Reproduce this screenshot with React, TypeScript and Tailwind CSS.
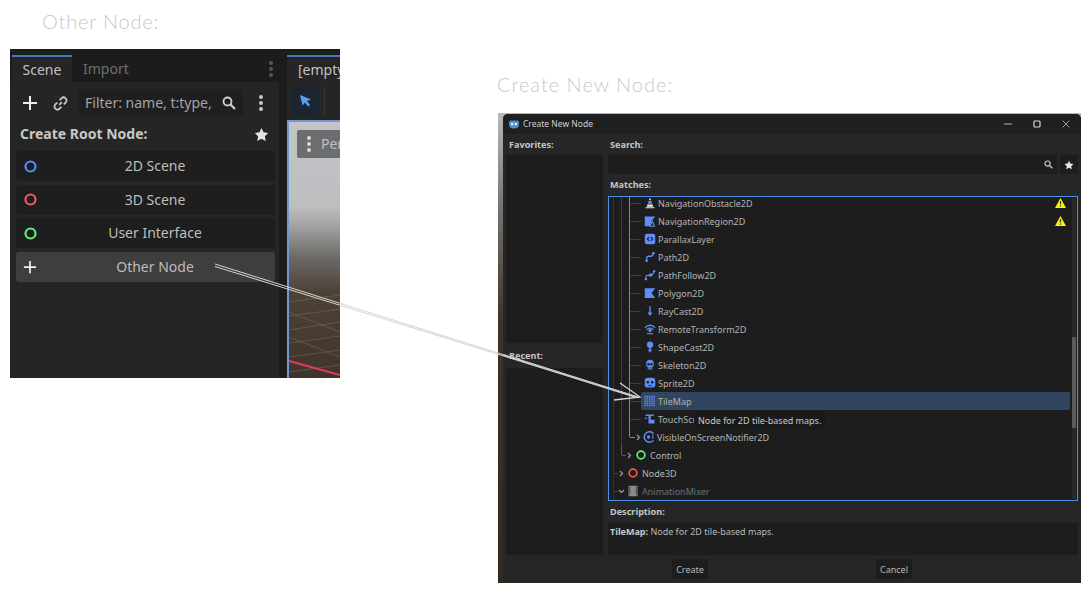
import { ReactNode } from 'react'

const BLUE = '#5f8df5'

function Svg({ size = 12, children }: { size?: number; children: ReactNode }) {
  return (
    <svg width={size} height={size} viewBox="0 0 16 16" className="shrink-0">
      {children}
    </svg>
  )
}

function Kebab({ color = '#c8c8c8' }: { color?: string }) {
  return (
    <svg width="6" height="18" viewBox="0 0 6 18" className="shrink-0">
      <circle cx="3" cy="3" r="2" fill={color} />
      <circle cx="3" cy="9" r="2" fill={color} />
      <circle cx="3" cy="15" r="2" fill={color} />
    </svg>
  )
}

function Plus({ size = 16 }: { size?: number }) {
  return (
    <svg width={size} height={size} viewBox="0 0 16 16" className="shrink-0">
      <path d="M8 1v14M1 8h14" stroke="#eeeeee" strokeWidth="2" />
    </svg>
  )
}

function Search({ size = 14, color = '#d0d0d0' }: { size?: number; color?: string }) {
  return (
    <svg width={size} height={size} viewBox="0 0 14 14" className="shrink-0">
      <circle cx="5.5" cy="5.5" r="4" fill="none" stroke={color} strokeWidth="1.8" />
      <path d="M8.5 8.5L13 13" stroke={color} strokeWidth="2.2" />
    </svg>
  )
}

function Star({ size = 16 }: { size?: number }) {
  return (
    <svg width={size} height={size} viewBox="0 0 16 16" className="shrink-0">
      <path d="M8 1l2.2 4.6 5 .7-3.6 3.5.9 5L8 12.4l-4.5 2.4.9-5L.8 6.3l5-.7z" fill="#e4e4e4" />
    </svg>
  )
}

function Ring({ color, size = 13 }: { color: string; size?: number }) {
  return (
    <svg width={size} height={size} viewBox="0 0 13 13" className="shrink-0">
      <circle cx="6.5" cy="6.5" r="5" fill="none" stroke={color} strokeWidth="2.2" />
    </svg>
  )
}

function RootButton({ icon, label, active }: { icon: ReactNode; label: string; active?: boolean }) {
  return (
    <div className={`flex h-[30px] items-center rounded-[3px] px-[7px] ${active ? 'bg-[#3e3e3e]' : 'bg-[#1e1e1e]'}`}>
      <span className="flex w-[14px] justify-center">{icon}</span>
      <span className="flex-1 pl-[5px] text-center text-[14px] leading-none text-[#bdbdbd]">{label}</span>
    </div>
  )
}

function Warning() {
  return (
    <svg width="11" height="10" viewBox="0 0 11 10" className="shrink-0">
      <path d="M5.5 0L11 10H0z" fill="#f5f50a" />
      <path d="M5.5 3v3.6M5.5 7.6v1.2" stroke="#3a3a1a" strokeWidth="1.2" />
    </svg>
  )
}

const ICONS: Record<string, ReactNode> = {
  obstacle: (
    <Svg>
      <path d="M8 1l1.4 3H6.6z" fill="#f0f0f0" />
      <path d="M6.2 5h3.6l1.2 4H5z" fill={BLUE} />
      <path d="M4.6 10h6.8l1 3H3.6z" fill="#f0f0f0" />
      <path d="M2 13.5h12V15H2z" fill="#f0f0f0" />
    </Svg>
  ),
  region: (
    <Svg>
      <path d="M1 2h14l-5 6-2 7H1z" fill={BLUE} />
      <path d="M11 8l3 7H8z" fill="none" stroke={BLUE} strokeWidth="1.4" />
    </Svg>
  ),
  parallax: (
    <Svg>
      <rect x="1" y="1" width="14" height="14" rx="3" fill={BLUE} />
      <path d="M7 5.5L4.5 8 7 10.5M9 5.5L11.5 8 9 10.5" fill="none" stroke="#16243f" strokeWidth="1.5" />
    </Svg>
  ),
  path: (
    <Svg>
      <path d="M3.5 12.5v-3Q3.5 7 6 7h3q3 0 3.5-3.5" fill="none" stroke={BLUE} strokeWidth="1.7" />
      <circle cx="3.5" cy="13" r="1.8" fill={BLUE} />
      <circle cx="12.5" cy="3" r="1.8" fill={BLUE} />
    </Svg>
  ),
  follow: (
    <Svg>
      <path d="M2.5 13.5v-3q0-2 2.500-2h4q3 0 4-4.500" fill="none" stroke={BLUE} strokeWidth="1.5" />
      <circle cx="2.5" cy="13.5" r="1.6" fill={BLUE} />
      <circle cx="9" cy="8" r="2.3" fill={BLUE} />
      <circle cx="13.5" cy="3" r="1.6" fill={BLUE} />
    </Svg>
  ),
  polygon: (
    <Svg>
      <path d="M1 1.5h14L10 8l5 6.5H1z" fill={BLUE} />
    </Svg>
  ),
  raycast: (
    <Svg>
      <path d="M8 1.5v11" stroke={BLUE} strokeWidth="1.8" />
      <path d="M4.5 10L8 14.5 11.5 10z" fill={BLUE} />
    </Svg>
  ),
  remote: (
    <Svg>
      <path d="M1 6.5Q8-.5 15 6.5M3.5 9Q8 4.5 12.5 9" fill="none" stroke={BLUE} strokeWidth="1.7" />
      <circle cx="8" cy="10" r="2.2" fill={BLUE} />
      <path d="M4 13.5h8V15H4z" fill={BLUE} />
    </Svg>
  ),
  shape: (
    <Svg>
      <circle cx="8" cy="5" r="4.2" fill={BLUE} />
      <path d="M8 9v3" stroke={BLUE} strokeWidth="2" />
      <path d="M5 11.5h6l-3 4z" fill={BLUE} />
    </Svg>
  ),
  skeleton: (
    <Svg>
      <path d="M3 6a5 5 0 0 1 10 0v4h-2v4H5v-4H3z" fill={BLUE} />
      <circle cx="6" cy="7" r="1.6" fill="#1d1d1d" />
      <circle cx="10" cy="7" r="1.6" fill="#1d1d1d" />
      <path d="M6 12h4" stroke="#1d1d1d" strokeWidth="1" />
    </Svg>
  ),
  sprite: (
    <Svg>
      <path d="M1 5a4 4 0 0 1 4-4h6a4 4 0 0 1 4 4v6a3 3 0 0 1-3 3H4a3 3 0 0 1-3-3z" fill={BLUE} />
      <circle cx="5" cy="7" r="1.7" fill="#1d1d1d" />
      <circle cx="11" cy="7" r="1.7" fill="#1d1d1d" />
      <path d="M6 11.5h4" stroke="#1d1d1d" strokeWidth="1.2" />
    </Svg>
  ),
  tilemap: (
    <Svg>
      <path d="M1.5 1v14M4.5 1v14M7.5 1v14M10.5 1v14M13.5 1v14" stroke={BLUE} strokeWidth="2" />
      <path d="M0 3.8h16M0 6.8h16M0 9.8h16M0 12.8h16" stroke="#2f4560" strokeWidth="1" />
    </Svg>
  ),
  touch: (
    <Svg>
      <path d="M2 2h11v2H9v5h5v5H6V4H2z" fill={BLUE} />
      <path d="M1 7h3" stroke={BLUE} strokeWidth="1.5" />
    </Svg>
  ),
  notifier: (
    <Svg>
      <path d="M14 3.5a7 7 0 1 0 0 9" fill="none" stroke={BLUE} strokeWidth="2" />
      <circle cx="7.5" cy="8" r="2.2" fill={BLUE} />
      <path d="M13 5v6" stroke={BLUE} strokeWidth="2" strokeDasharray="2 1" />
    </Svg>
  ),
  mixer: (
    <Svg>
      <path d="M2 1h12v14H2z" fill="#8a8a8a" />
      <path d="M3.5 3v10M12.5 3v10" stroke="#1d1d1d" strokeWidth="1.5" strokeDasharray="1.5 1.5" />
    </Svg>
  ),
}

function Chevron({ down }: { down?: boolean }) {
  return (
    <svg width="7" height="7" viewBox="0 0 7 7" className="shrink-0">
      <path d={down ? 'M1 2l2.500 2.500L6 2' : 'M2 1l2.500 2.500L2 6'} fill="none" stroke="#9a9a9a" strokeWidth="1.2" />
    </svg>
  )
}

const LEAF_ROWS = [
  { icon: 'obstacle', label: 'NavigationObstacle2D', warn: true },
  { icon: 'region', label: 'NavigationRegion2D', warn: true },
  { icon: 'parallax', label: 'ParallaxLayer' },
  { icon: 'path', label: 'Path2D' },
  { icon: 'follow', label: 'PathFollow2D' },
  { icon: 'polygon', label: 'Polygon2D' },
  { icon: 'raycast', label: 'RayCast2D' },
  { icon: 'remote', label: 'RemoteTransform2D' },
  { icon: 'shape', label: 'ShapeCast2D' },
  { icon: 'skeleton', label: 'Skeleton2D' },
  { icon: 'sprite', label: 'Sprite2D' },
]

function LeafRow({ icon, label, warn, selected }: { icon: string; label: string; warn?: boolean; selected?: boolean }) {
  return (
    <div className="flex h-[18px] items-center">
      {/* guide lines of the tree, 8px apart */}
      <span className="ml-[4px] h-full w-px shrink-0 bg-[#333333]" />
      <span className="ml-[7px] h-full w-px shrink-0 bg-[#3c3c3c]" />
      <span className="ml-[7px] h-full w-px shrink-0 bg-[#8a8a8a]" />
      <span className="h-px w-[11px] shrink-0 bg-[#3c3c3c]" />
      <div className={`flex h-full min-w-0 flex-1 items-center pl-[2px] ${selected ? 'rounded-[2px] bg-[#2f4560]' : ''}`}>
        <span className="ml-px">{ICONS[icon]}</span>
        <span className="ml-[2px] flex-1 whitespace-nowrap text-[9px] leading-none text-[#b4b4b4]">{label}</span>
        {warn && (
          <span className="mr-[4px]">
            <Warning />
          </span>
        )}
      </div>
    </div>
  )
}

function FieldLabel({ children }: { children: ReactNode }) {
  return <div className="text-[9.1px] font-bold leading-none text-[#c4c4c4]">{children}</div>
}

function DialogButton({ label }: { label: string }) {
  return (
    <div className="flex h-[20px] w-[36px] items-center justify-center rounded-[2px] bg-[#1d1d1d] text-[9px] leading-none text-[#b8b8b8]">
      {label}
    </div>
  )
}

function ScenePanel() {
  return (
    <div className="absolute left-[10px] top-[49px] flex h-[329px] w-[330px] overflow-hidden bg-[#1c1c1c] font-['Noto_Sans',sans-serif]">
      <div className="flex w-[269px] shrink-0 flex-col pt-[6px]">
        {/* tabs */}
        <div className="ml-[2px] flex h-[27px] shrink-0 items-center">
          <div className="flex h-full w-[60px] items-center justify-center border-t-2 border-[#4577c0] bg-[#252525] text-[14px] leading-none text-[#c2c2c2]">
            Scene
          </div>
          <span className="ml-[11px] flex-1 text-[14px] leading-none text-[#6f6f6f]">Import</span>
          <span className="mr-[5px]">
            <Kebab color="#555555" />
          </span>
        </div>
        <div className="flex flex-1 flex-col bg-[#252525]">
          {/* toolbar */}
          <div className="mt-[7px] flex h-[28px] items-center">
            <span className="ml-[12px]">
              <Plus />
            </span>
            <svg width="15" height="15" viewBox="0 0 16 16" className="ml-[15px] shrink-0">
              <path d="M6.5 9.5l3-3" stroke="#c8c8c8" strokeWidth="1.8" />
              <path d="M7 4.5l2-2A3 3 0 0 1 13.5 7l-2 2M9 11.5l-2 2A3 3 0 0 1 2.500 9l2-2" fill="none" stroke="#c8c8c8" strokeWidth="1.9" />
            </svg>
            <div className="ml-[11px] flex h-[28px] w-[164px] items-center justify-between rounded-[2px] bg-[#1f1f1f] pl-[6px] pr-[7px]">
              <span className="whitespace-nowrap text-[14px] leading-none text-[#a4a4a4]">Filter: name, t:type,</span>
              <Search />
            </div>
            <span className="ml-[15px]">
              <Kebab />
            </span>
          </div>
          <div className="mt-[7px] flex h-[20px] items-center justify-between px-[10px]">
            <span className="text-[14px] font-bold leading-none text-[#c8c8c8]">Create Root Node:</span>
            <Star size={15} />
          </div>
          <div className="ml-[6px] mr-[4px] mt-[7px] flex flex-col gap-[3.5px]">
            <RootButton icon={<Ring color="#5b8cf0" />} label="2D Scene" />
            <RootButton icon={<Ring color="#f05a5a" />} label="3D Scene" />
            <RootButton icon={<Ring color="#5ff07a" />} label="User Interface" />
            <RootButton icon={<Plus size={14} />} label="Other Node" active />
          </div>
        </div>
      </div>

      {/* editor viewport, cut off by the crop */}
      <div className="ml-[8px] flex min-w-0 flex-1 flex-col pt-[6px]">
        <div className="flex h-[27px] shrink-0 items-center border-t-2 border-[#4577c0] bg-[#252525] pl-[11px] text-[14px] leading-none text-[#c2c2c2]">
          <span className="whitespace-nowrap">[empty</span>
        </div>
        <div className="flex h-[38px] shrink-0 items-center bg-[#252525] pl-[4px]">
          <div className="flex h-[29px] w-[28px] items-center justify-center rounded-[2px] bg-[#1a2531]">
            <svg width="14" height="14" viewBox="0 0 14 14">
              <path d="M2 1l11 4.500-4 1.500 3 4-2 1.500-3-4-2.500 3z" fill="#5b9ff5" />
            </svg>
          </div>
          <span className="ml-[5px] h-[28px] w-px bg-[#383838]" />
        </div>
        <div className="relative flex-1 overflow-hidden border-l-2 border-t-2 border-[#7398cf] bg-[linear-gradient(180deg,#c2c4c7_0%,#bcbec0_33%,#a5a5a6_40%,#6c6a66_53%,#4d4238_66%,#40352b_100%)]">
          <svg className="absolute inset-0 h-full w-full" viewBox="0 0 51 256" preserveAspectRatio="none">
            <path
              d="M0 180L51 173M0 194L51 187M0 208L51 200M0 221L51 214M0 235L51 228M0 250L51 243M0 190L51 210M0 215L51 235"
              stroke="#6a6258"
              strokeWidth="0.7"
            />
            <path d="M0 239L51 253" stroke="#e03a5c" strokeWidth="2" />
          </svg>
          <div className="absolute left-[8px] top-[8px] flex h-[28px] w-[60px] items-center rounded-[2px] bg-[#6c6d6f] pl-[9px]">
            <Kebab color="#d8d8d8" />
            <span className="ml-[9px] text-[14px] leading-none text-[#bfc0c2]">Per</span>
          </div>
        </div>
      </div>
    </div>
  )
}

function NodeDialog() {
  return (
    <div className="absolute left-[498px] top-[113px] h-[470px] w-[583px] bg-[linear-gradient(180deg,#b8b8b8_0%,#77736f_20%,#3c3228_45%,#32291f_100%)] pl-[5px] pt-px font-['Noto_Sans',sans-serif]">
      <div className="flex h-full flex-col overflow-hidden rounded-t-[5px] bg-[#262626]">
        {/* title bar */}
        <div className="flex h-[20px] shrink-0 items-center bg-[#1f1f1f]">
          <svg width="12" height="12" viewBox="0 0 16 16" className="ml-[5px] shrink-0">
            <path d="M1 6l2-3 3 1 2-1.500L10 4l3-1 2 3-1 6q-6 4-12 0z" fill="#4d93cf" />
            <circle cx="5.5" cy="8" r="1.7" fill="#e8f0f8" />
            <circle cx="10.5" cy="8" r="1.7" fill="#e8f0f8" />
          </svg>
          <span className="ml-[3px] flex-1 text-[8.5px] leading-none text-[#cfcfcf]">Create New Node</span>
          <svg width="8" height="8" viewBox="0 0 8 8" className="mr-[21px] shrink-0">
            <path d="M0 4h8" stroke="#b0b0b0" strokeWidth="1" />
          </svg>
          <svg width="8" height="8" viewBox="0 0 8 8" className="mr-[21px] shrink-0">
            <rect x="1" y="1" width="6" height="6" rx="1" fill="none" stroke="#d8d8d8" strokeWidth="1.2" />
          </svg>
          <svg width="8" height="8" viewBox="0 0 8 8" className="mr-[11px] shrink-0">
            <path d="M.5.5l7 7M7.5.5l-7 7" stroke="#a8a8a8" strokeWidth="0.9" />
          </svg>
        </div>

        <div className="flex min-h-0 flex-1 pt-[5px]">
          {/* favorites and recent */}
          <div className="ml-[3px] flex w-[97px] shrink-0 flex-col">
            <div className="flex h-[16px] items-center pb-[5px] pl-[3px]">
              <FieldLabel>Favorites:</FieldLabel>
            </div>
            <div className="h-[188px] rounded-[2px] bg-[#1d1d1d]" />
            <div className="flex h-[25px] items-center pl-[3px] pt-[1px]">
              <FieldLabel>Recent:</FieldLabel>
            </div>
            <div className="h-[187px] rounded-[2px] bg-[#1d1d1d]" />
          </div>

          {/* search and tree */}
          <div className="ml-[5px] mr-[3px] flex min-w-0 flex-1 flex-col">
            <div className="flex h-[16px] items-center pb-[5px] pl-[2px]">
              <FieldLabel>Search:</FieldLabel>
            </div>
            <div className="flex h-[19px] shrink-0">
              <div className="flex flex-1 items-center justify-end rounded-[2px] bg-[#1d1d1d] pr-[4px]">
                <Search size={9} color="#c8c8c8" />
              </div>
              <div className="ml-[3px] flex w-[18px] items-center justify-center rounded-[2px] bg-[#1d1d1d]">
                <Star size={10} />
              </div>
            </div>
            <div className="flex h-[22px] shrink-0 items-center pl-[2px]">
              <FieldLabel>Matches:</FieldLabel>
            </div>
            <div className="relative h-[305px] shrink-0 overflow-hidden border border-[#4a90e8] bg-[#1d1d1d]">
              <div className="-mt-[3px] flex flex-col pr-[7px]">
                {LEAF_ROWS.map((r) => (
                  <LeafRow key={r.label} icon={r.icon} label={r.label} warn={r.warn} />
                ))}
                <LeafRow icon="tilemap" label="TileMap" selected />
                <LeafRow icon="touch" label="TouchScreenButton2D" />
                <div className="flex h-[18px] items-center">
                  <span className="ml-[4px] h-full w-px shrink-0 bg-[#333333]" />
                  <span className="ml-[7px] h-full w-px shrink-0 bg-[#3c3c3c]" />
                  <span className="ml-[7px] h-[9px] w-px shrink-0 self-start bg-[#8a8a8a]" />
                  <span className="h-px w-[5px] shrink-0 bg-[#8a8a8a]" />
                  <Chevron />
                  <span className="ml-[1px]">{ICONS.notifier}</span>
                  <span className="ml-[2px] whitespace-nowrap text-[9px] leading-none text-[#b4b4b4]">VisibleOnScreenNotifier2D</span>
                </div>
                <div className="flex h-[18px] items-center">
                  <span className="ml-[4px] h-full w-px shrink-0 bg-[#333333]" />
                  <span className="ml-[7px] h-[9px] w-px shrink-0 self-start bg-[#5a5a5a]" />
                  <span className="h-px w-[4px] shrink-0 bg-[#5a5a5a]" />
                  <Chevron />
                  <span className="ml-[3px]">
                    <Ring color="#5ff07a" size={10} />
                  </span>
                  <span className="ml-[4px] text-[9px] leading-none text-[#b4b4b4]">Control</span>
                </div>
                <div className="flex h-[18px] items-center">
                  <span className="ml-[4px] h-full w-px shrink-0 bg-[#333333]" />
                  <span className="h-px w-[4px] shrink-0 bg-[#444444]" />
                  <Chevron />
                  <span className="ml-[3px]">
                    <Ring color="#f05a5a" size={10} />
                  </span>
                  <span className="ml-[4px] text-[9px] leading-none text-[#b4b4b4]">Node3D</span>
                </div>
                <div className="flex h-[18px] items-center">
                  <span className="ml-[4px] h-full w-px shrink-0 bg-[#333333]" />
                  <span className="h-px w-[4px] shrink-0 bg-[#444444]" />
                  <Chevron down />
                  <span className="ml-[2px]">{ICONS.mixer}</span>
                  <span className="ml-[3px] text-[9px] leading-none text-[#6f6f6f]">AnimationMixer</span>
                </div>
              </div>

              {/* scrollbar */}
              <div className="absolute bottom-[1px] right-[1px] top-[1px] w-[4px] bg-[#292929]">
                <div className="absolute left-0 top-[139px] h-[91px] w-[4px] rounded-[1px] bg-[#5c5c5c]" />
              </div>

              {/* tooltip */}
              <div className="absolute left-[85px] top-[214px] flex h-[19px] w-[132px] items-center bg-[#1a1a1a] pl-[4px] text-[9px] leading-none text-[#c8c8c8]">
                Node for 2D tile-based maps.
              </div>
            </div>
            <div className="flex h-[22px] shrink-0 items-center pl-[2px]">
              <FieldLabel>Description:</FieldLabel>
            </div>
            <div className="h-[32px] shrink-0 rounded-[2px] bg-[#1d1d1d] pl-[2px] pt-[3px] text-[9px] leading-[11px] text-[#b8b8b8]">
              <span className="font-bold text-[#c8c8c8]">TileMap:</span> Node for 2D tile-based maps.
            </div>
          </div>
        </div>

        {/* buttons */}
        <div className="flex h-[28px] shrink-0 items-start pt-[4px]">
          <span className="ml-[169px]">
            <DialogButton label="Create" />
          </span>
          <span className="ml-[168px]">
            <DialogButton label="Cancel" />
          </span>
        </div>
      </div>
    </div>
  )
}

export default function App() {
  return (
    <div className="relative h-[593px] w-[1090px] overflow-hidden bg-white">
      <div className="absolute left-[42px] top-[8px] font-['Lato',sans-serif] text-[20px] font-light leading-[26px] tracking-[0.8px] text-[#c8c8c8]">
        Other Node:
      </div>
      <div className="absolute left-[497px] top-[71px] font-['Lato',sans-serif] text-[20px] font-light leading-[26px] tracking-[1px] text-[#c8c8c8]">
        Create New Node:
      </div>

      <ScenePanel />
      <NodeDialog />

      {/* hand drawn arrow over both screenshots */}
      <svg className="pointer-events-none absolute inset-0" width="1090" height="593" viewBox="0 0 1090 593">
        <g fill="none" stroke="#d4d4d4" strokeWidth="1">
          <path d="M215 264L638 397" />
          <path d="M215 266.5L639 398" />
          <path d="M503 355L636 397" stroke="#c8c8c8" strokeWidth="2" />
          <path d="M620 383L640 397L614 400" strokeWidth="1.3" />
        </g>
      </svg>
    </div>
  )
}
